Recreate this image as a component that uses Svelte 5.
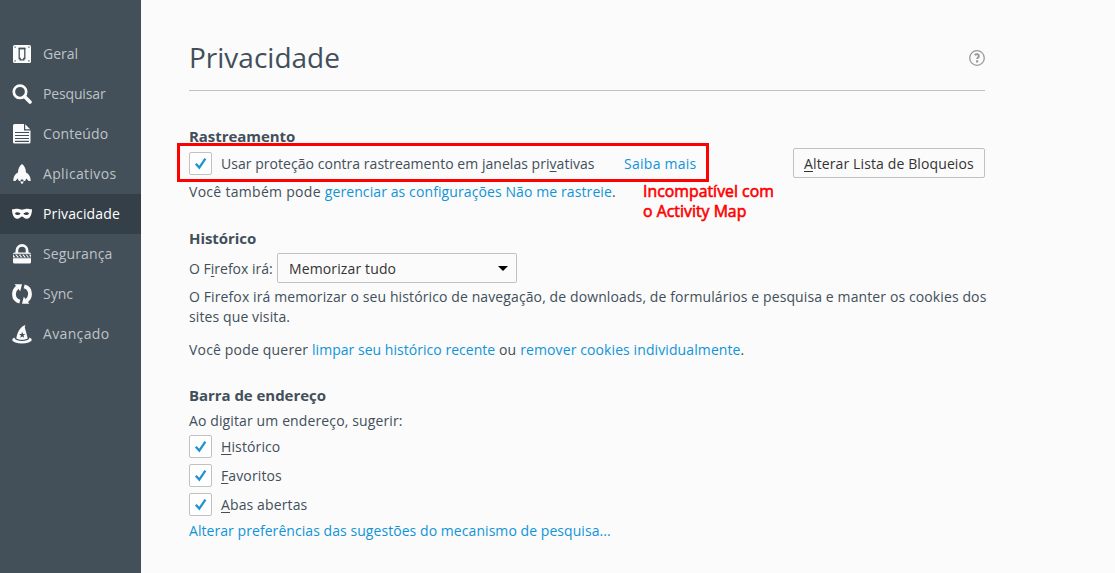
<script>
  let active = $state('Privacidade');
  const nav = [
    { name: 'Geral' },
    { name: 'Pesquisar', tone: 'tight' },
    { name: 'Conteúdo', tone: 'airy' },
    { name: 'Aplicativos', tone: 'wide' },
    { name: 'Privacidade', tone: 'airy' },
    { name: 'Segurança', tone: 'airy' },
    { name: 'Sync' },
    { name: 'Avançado', tone: 'wide' }
  ];
  let tracking = $state(true);
  let options = $state([
    { key: 'H', rest: 'istórico', on: true },
    { key: 'F', rest: 'avoritos', on: true },
    { key: 'A', rest: 'bas abertas', on: true }
  ]);
</script>

{#snippet icon(name)}
  <svg class="icon" viewBox="0 0 20 20" width="20" height="20" fill="currentColor">
    {#if name === 'Geral'}
      <rect x="1" y="1" width="18" height="18" rx="1.500" />
      <path d="M7.200 4.700h5.600v9.800h-1v1.300H8.200v-1.300h-1z" fill="none" stroke="#434f59" stroke-width="1.300" />
      <path d="M6.600 4.400h6.800" stroke="#434f59" stroke-width="1.600" />
      <path d="M2.500 2.500h1.200v1.200H2.500zM16.300 2.500h1.200v1.200h-1.200zM2.500 16.300h1.200v1.200H2.500zM16.300 16.300h1.200v1.200h-1.200z" fill="#434f59" />
    {:else if name === 'Pesquisar'}
      <circle cx="8" cy="7.800" r="6.200" fill="none" stroke="currentColor" stroke-width="2.700" />
      <path d="M12.500 12.500L18 18" stroke="currentColor" stroke-width="3.600" stroke-linecap="round" />
    {:else if name === 'Conteúdo'}
      <path d="M2.500 0H12v6.500h6.500V18a1.500 1.500 0 0 1-1.500 1.500H2.500A1.500 1.500 0 0 1 1 18V1.500A1.500 1.500 0 0 1 2.500 0zM13.200.3l5 5h-5z" />
      <path d="M3 8.500h14M3 11.500h14M3 14.500h14M3 17.300h14" stroke="#434f59" stroke-width="1.200" />
    {:else if name === 'Aplicativos'}
      <path d="M10 0c2.500 2 3.900 4.500 4 8.500 3 1.500 4.700 4 4.700 8.500h-2l-2.500-2.500L13.200 17h-1.500l-.7-1.500H9L8.300 17H6.800l-1-2.500L3.300 17h-2c0-4.500 1.700-7 4.700-8.500C6.100 4.500 7.500 2 10 0zM8 17.500h4L10 20.300z" />
    {:else if name === 'Privacidade'}
      <path fill-rule="evenodd" d="M0 5.200c2.200.2 3.400-.7 5.700-.5 1.800.1 2.900 1 4.300 1s2.500-.9 4.300-1c2.300-.2 3.500.7 5.700.5 0 2.800-.5 6-2.400 8.200-1.300 1.500-3.900 1.900-5.300.7-.8-.7-1.400-1.500-2.300-1.500s-1.500.8-2.300 1.500c-1.400 1.200-4 .8-5.300-.7C.5 11.200 0 8 0 5.200zM2.900 9.700c1.500 1.600 4 1.800 5.700.1C7 8.400 4.300 7.500 2.900 9.700zM17.100 9.700c-1.500 1.600-4 1.800-5.700.1 1.600-1.400 4.300-2.300 5.700-.1z" />
    {:else if name === 'Segurança'}
      <path d="M4.900 9V6.500a5.100 5.100 0 0 1 10.200 0V9" fill="none" stroke="currentColor" stroke-width="2.700" />
      <path d="M2.500 8.500h15A1.500 1.500 0 0 1 19 10v8a1.500 1.500 0 0 1-1.500 1.500h-15A1.500 1.500 0 0 1 1 18v-8a1.500 1.500 0 0 1 1.500-1.500z" />
      <path d="M2 10.500l2.600 3M5.500 10.500l2.600 3M9 10.500l2.600 3M12.500 10.500l2.600 3M15.700 10.500l2.300 2.700" stroke="#434f59" stroke-width="1.500" />
      <path d="M1 10.300h18M1 13.800h18" stroke="#434f59" stroke-width=".8" />
    {:else if name === 'Sync'}
      <path d="M7.800 17.600C3.500 16.400 1.900 13 2 9.800 2.100 7 3.200 5 5.400 3.300M12.200 2.400c4.300 1.200 5.900 4.600 5.800 7.800-.1 2.800-1.200 4.800-3.400 6.500" fill="none" stroke="currentColor" stroke-width="3.800" />
      <path d="M2.600.3h7.400L8.200 7.200zM17.400 19.700H10l1.800-6.900z" />
    {:else}
      <path fill-rule="evenodd" d="M13.800.7c-1 1.100-1.200 2.300-.8 3.500 1 3.300 1.900 6.700 2.700 10.200-3.300 1.700-8.200 1.700-11.400 0C5 9.500 7.500 2.800 13.800.7zM10.200 7.800l-.8 2.200-2.300.1 1.800 1.400-.6 2.200 1.900-1.300 2 1.300-.7-2.200 1.800-1.400-2.300-.1z" />
      <path d="M2.800 13.500C-.8 14.800-.5 17.200 3.300 18.500c4 1.300 9.400 1.300 13.400 0 3.800-1.300 4.100-3.700.5-5 .5 1-.2 1.800-1.700 2.400-3.200 1.300-7.800 1.300-11 0-1.500-.6-2.200-1.400-1.700-2.400z" />
    {/if}
  </svg>
{/snippet}

{#snippet mark(on)}
  <span class="box">
    {#if on}
      <svg width="21" height="21" viewBox="0 0 21 21"><path d="M5.800 10.700l3.500 3.900 6.100-9" fill="none" stroke="#2292d0" stroke-width="2.300" /></svg>
    {/if}
  </span>
{/snippet}

<div class="page">
  <nav>
    {#each nav as item}
      <button class={['item', item.tone, active === item.name && 'active']} onclick={() => (active = item.name)}>
        {@render icon(item.name)}<span>{item.name}</span>
      </button>
    {/each}
  </nav>

  <main>
    <header>
      <h1>Privacidade</h1>
      <svg class="help" width="16" height="16" viewBox="0 0 16 16">
        <circle cx="8" cy="8" r="7.300" fill="none" stroke="#999" stroke-width="1.300" />
        <path d="M5.600 5.100c1.500-1.200 4.300-1.200 4.300.8 0 1.500-1.800 1.600-1.800 3.200" fill="none" stroke="#999" stroke-width="1.900" />
        <rect x="7" y="10.300" width="2.200" height="2.200" fill="#999" />
      </svg>
    </header>

    <section class="tracking">
      <div>
        <h2>Rastreamento</h2>
        <div class="check-row">
          <button class="check" onclick={() => (tracking = !tracking)}>
            {@render mark(tracking)}<span class="t-use">Usar proteção contra rastreamento em janelas pri<u>v</u>ativas</span>
          </button>
          <a class="more" href="#saiba">Saiba mais</a>
          <div class="frame"></div>
          <div class="note">Incompatível com<br />o Activity Map</div>
        </div>
        <p class="t-also">Você também pode <a href="#rastreie">gerenciar as configurações Não me rastreie</a>.</p>
      </div>
      <button class="blocklist"><u>A</u>lterar Lista de Bloqueios</button>
    </section>

    <section class="history">
      <h2>Histórico</h2>
      <div class="select-row">
        <span class="t-will">O F<u>i</u>refox irá:</span>
        <button class="select"><span>Memorizar tudo</span><i></i></button>
      </div>
      <p class="t-long">O Firefox irá memorizar o seu histórico de navegação, de downloads, de formulários e pesquisa e manter os cookies dos<br />sites que visita.</p>
      <p class="clear">Você pode querer <a class="recent" href="#limpar">limpar seu histórico recente</a> ou <a class="cookies" href="#cookies">remover cookies individualmente</a>.</p>
    </section>

    <section class="address">
      <h2>Barra de endereço</h2>
      <p class="t-typing">Ao digitar um endereço, sugerir:</p>
      <div class="options">
        {#each options as o}
          <button class="check" onclick={() => (o.on = !o.on)}>
            {@render mark(o.on)}<span><u>{o.key}</u>{o.rest}</span>
          </button>
        {/each}
      </div>
      <p class="t-prefs"><a href="#sugestoes">Alterar preferências das sugestões do mecanismo de pesquisa...</a></p>
    </section>
  </main>
</div>

<style>
  :global(body) { margin: 0; background: #fbfbfb; }
  .page { display: flex; width: 1115px; height: 573px; overflow: hidden; background: #fbfbfb; color: #424f5a; font: 14px/20px "Open Sans", "Noto Sans", sans-serif; }
  button { font: inherit; color: inherit; background: none; border: 0; padding: 0; margin: 0; text-align: left; white-space: nowrap; letter-spacing: inherit; }
  p, h1, h2 { margin: 0; white-space: nowrap; }
  a { color: #0f94d8; text-decoration: none; }
  u { text-decoration-thickness: 1px; text-underline-offset: 2px; }
  nav { width: 141px; flex: none; box-sizing: border-box; padding-top: 34px; background: #434f59; display: flex; flex-direction: column; }
  .item { display: flex; align-items: center; gap: 11px; height: 40px; padding-left: 12px; color: #bfc3c7; }
  .item.tight { letter-spacing: -.15px; }
  .item.airy { letter-spacing: .13px; }
  .item.wide { letter-spacing: .35px; }
  .item.active { background: #343f48; color: #fff; }
  .icon { flex: none; color: #fbfbfb; }
  main { width: 796px; margin-left: 48px; }
  header { height: 90px; border-bottom: 1px solid #c1c1c1; display: flex; justify-content: space-between; }
  h1 { font-size: 28px; line-height: 40px; font-weight: 400; margin-top: 37px; }
  .help { margin-top: 50px; }
  h2 { font-size: 15px; line-height: 18px; padding-bottom: 2px; font-weight: 700; letter-spacing: -.05px; }
  .tracking { display: flex; justify-content: space-between; padding-top: 36px; }
  .check-row { position: relative; display: flex; align-items: center; height: 23px; margin-top: 5px; }
  .check { display: flex; align-items: center; gap: 9px; height: 23px; }
  .box { width: 21px; height: 21px; border: 1px solid #c1c1c1; border-radius: 2px; background: #fff; }
  .box svg { display: block; }
  .t-use { letter-spacing: .04px; }
  .more { margin-left: 29.500px; letter-spacing: .25px; }
  .frame { position: absolute; left: -12px; top: -9px; width: 526px; height: 33px; border: 3px solid #f00; }
  .note { position: absolute; left: 454px; top: 29px; color: #f00; font: 500 15.8px/20px "Open Sans", sans-serif; letter-spacing: .03px; white-space: nowrap; -webkit-text-stroke: .6px #f00; }
  .t-also { margin-top: 7px; letter-spacing: .29px; }
  .t-also a { letter-spacing: .1px; }
  .blocklist { box-sizing: border-box; width: 192px; height: 30px; margin-top: 21px; padding: 1px 0 0 10px; border: 1px solid #c1c1c1; border-radius: 2px; color: #333; flex: none; letter-spacing: .12px; }
  .history { padding-top: 27px; }
  .select-row { display: flex; align-items: center; height: 30px; margin-top: 4px; }
  .t-will { width: 88px; padding-top: 1px; }
  .select { box-sizing: border-box; width: 240px; height: 30px; border: 1px solid #c1c1c1; border-radius: 2px; color: #333; display: flex; align-items: center; justify-content: space-between; padding: 0 8px 0 11px; letter-spacing: .13px; }
  .select span { padding-top: 2px; }
  .select i { border: 5px solid transparent; border-top: 5px solid #000; border-bottom: 0; }
  .t-long { margin-top: 4px; letter-spacing: .11px; }
  .clear { margin-top: 13px; letter-spacing: .18px; }
  .clear .recent { letter-spacing: .03px; }
  .clear .cookies { letter-spacing: .1px; }
  .address { padding-top: 26px; }
  .t-typing { margin-top: 5px; letter-spacing: .12px; }
  .options { display: flex; flex-direction: column; align-items: flex-start; gap: 6px; margin-top: 4px; letter-spacing: .12px; }
  .t-prefs { margin-top: 5px; letter-spacing: .06px; }
</style>
